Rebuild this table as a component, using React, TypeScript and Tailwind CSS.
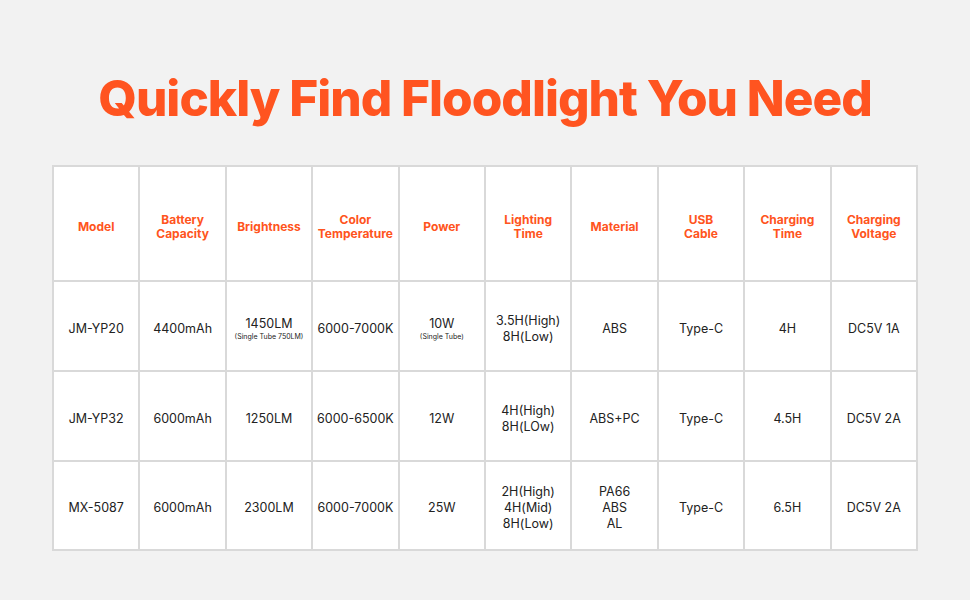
const headers = [
  ["Model"],
  ["Battery", "Capacity"],
  ["Brightness"],
  ["Color", "Temperature"],
  ["Power"],
  ["Lighting", "Time"],
  ["Material"],
  ["USB", "Cable"],
  ["Charging", "Time"],
  ["Charging", "Voltage"],
];

type Cell = { lines: string[]; note?: string };

const rows: Cell[][] = [
  [
    { lines: ["JM-YP20"] },
    { lines: ["4400mAh"] },
    { lines: ["1450LM"], note: "(Single Tube 750LM)" },
    { lines: ["6000-7000K"] },
    { lines: ["10W"], note: "(Single Tube)" },
    { lines: ["3.5H(High)", "8H(Low)"] },
    { lines: ["ABS"] },
    { lines: ["Type-C"] },
    { lines: ["4H"] },
    { lines: ["DC5V 1A"] },
  ],
  [
    { lines: ["JM-YP32"] },
    { lines: ["6000mAh"] },
    { lines: ["1250LM"] },
    { lines: ["6000-6500K"] },
    { lines: ["12W"] },
    { lines: ["4H(High)", "8H(LOw)"] },
    { lines: ["ABS+PC"] },
    { lines: ["Type-C"] },
    { lines: ["4.5H"] },
    { lines: ["DC5V 2A"] },
  ],
  [
    { lines: ["MX-5087"] },
    { lines: ["6000mAh"] },
    { lines: ["2300LM"] },
    { lines: ["6000-7000K"] },
    { lines: ["25W"] },
    { lines: ["2H(High)", "4H(Mid)", "8H(Low)"] },
    { lines: ["PA66", "ABS", "AL"] },
    { lines: ["Type-C"] },
    { lines: ["6.5H"] },
    { lines: ["DC5V 2A"] },
  ],
];

export default function App() {
  return (
    <div className="w-[970px] h-[600px] bg-[#f2f2f2] font-['Inter',sans-serif] overflow-hidden">
      <h1 className="pt-[69px] h-[165px] text-center text-[49.5px] leading-[58px] font-extrabold tracking-[-1px] text-[#ff5420]">
        Quickly Find Floodlight You Need
      </h1>
      <div className="mx-auto w-[866px] grid grid-cols-10 grid-rows-[113px_88px_88px_87px] gap-[2px] p-[2px] bg-[#d9d9d9]">
        {headers.map((h, i) => (
          <div key={i} className="bg-white flex flex-col items-center justify-center text-[12px] leading-[14px] font-bold text-[#ff5420] text-center pt-[6px]">
            {h.map((l) => (
              <span key={l}>{l}</span>
            ))}
          </div>
        ))}
        {rows.map((r, ri) =>
          r.map((c, ci) => (
            <div key={`${ri}-${ci}`} className="bg-white flex flex-col items-center justify-center text-[12.5px] leading-[16px] text-[#222] text-center pt-[5px]">
              {c.lines.map((l) => (
                <span key={l}>{l}</span>
              ))}
              {c.note && <span className="text-[7px] leading-[9px]">{c.note}</span>}
            </div>
          ))
        )}
      </div>
    </div>
  );
}
